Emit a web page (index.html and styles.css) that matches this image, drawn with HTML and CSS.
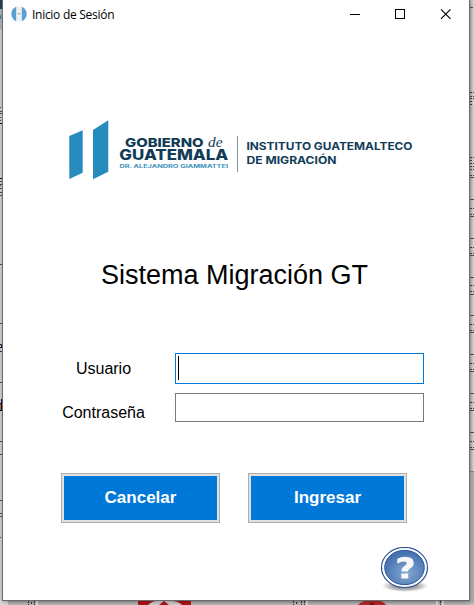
FILE: index.html
```html
<!DOCTYPE html>
<html lang="es">
<head>
<meta charset="utf-8">
<title>Inicio de Sesión</title>
<link rel="stylesheet" href="styles.css">
</head>
<body>
<svg class="backdrop" width="474" height="605" viewBox="0 0 474 605" aria-hidden="true">
  <defs>
    <linearGradient id="fade" x1="0" x2="1"><stop offset="0" stop-color="#b6b6b6"/><stop offset="1" stop-color="#dadada"/></linearGradient>
    <linearGradient id="fadeDown" x1="0" x2="0" y1="0" y2="1"><stop offset="0" stop-color="#a9a9a9"/><stop offset="1" stop-color="#c2c2c2"/></linearGradient>
  </defs>
  <rect width="474" height="605" fill="#dcdcdc"/>
  <rect width="2" height="9" fill="#24435a"/><rect y="9" width="2" height="20" fill="#b5c3ca"/><rect y="15" width="1" height="4" fill="#3c85a4"/>
  <rect x="470" width="4" height="605" fill="url(#fade)"/>
  <rect x="470" y="471" width="4" height="134" fill="#b3b3b3"/>
  <rect x="8" y="601" width="466" height="4" fill="url(#fadeDown)"/>
  <g stroke="#555">
    <path d="M0 111.500H2M0 113.500H2M0 181.500H2M0 184.500H2M0 188.500H2M0 192.500H2M0 195.500H2M0 264.500H2M0 323.500H2M0 382.500H2M0 441.500H2M0 454.500H2M0 500.500H2M0 513.500H2M0 516.500H2"/>
    <path stroke-dasharray="1 1" d="M0 107.500H3M0 117.500H3M0 120.500H3M0 185.500H3M0 537.500H3"/>
    <path stroke="#111" d="M0 123.500H2M0 178.500H2"/>
    <path d="M470 7.500H473M470 177.500H474M470 199.500H474M470 216.500H474M470 238.500H474M470 255.500H474M470 277.500H474M470 294.500H474M470 315.500H474M470 332.500H474M470 354.500H474M470 371.500H474M470 393.500H474M470 410.500H474M470 432.500H474M470 449.500H474"/>
    <path stroke="#444" stroke-dasharray="2 1" d="M470 92.500H474M470 96.500H474M470 98.500H474M470 101.500H473M470 104.500H473M470 157.500H474M470 160.500H473M470 163.500H474M470 166.500H474M470 169.500H474M470 175.500H474M470 208.500H474M470 214.500H474M470 247.500H474M470 253.500H474M470 285.500H474M470 291.500H474M470 324.500H474M470 330.500H474M470 363.500H474M470 369.500H474M470 402.500H474M470 408.500H474M470 441.500H474M470 447.500H474"/>
    <path stroke="#8b8b8b" d="M470 471.500H474"/>
  </g>
  <path d="M0 344.500H1.500V348M0 347.500H2M0 351.500H1.500" stroke="#161a3c" fill="none"/>
  <path d="M1.500 399V411M0 403.500H2M0 410.500H2" stroke="#100c35" fill="none"/><rect y="404" width="1" height="6" fill="#c67c32"/>
  <path stroke="#333" stroke-dasharray="2 1" d="M28.500 601V605M31.500 602V605M34.500 601V605M293.500 601V605M296.500 602V605M301.500 601V605M304.500 601V605M440.500 601V605"/>
  <path stroke="#e4e4e4" stroke-width="2" d="M37 601V605M307 601V605M437 601V605M443 601V605"/>
  <rect x="138" y="601" width="53" height="4" fill="#b51616"/>
  <path d="M148 605Q152 601 157 601H172Q178 601 182 605Z" fill="#d2d2d2"/>
  <path d="M159 605L164 601L169 605Z" fill="#b51616"/>
  <path d="M358 605Q362 601 366 601H379Q383 601 386 605Z" fill="#b92828"/><path d="M369 605L372 602L375 605Z" fill="#801515"/>
</svg>
<main class="window">
  <header class="titlebar">
    <svg class="app-icon" width="16" height="16" viewBox="0 0 16 16">
      <clipPath id="disc"><circle cx="8" cy="8" r="7.700"/></clipPath>
      <g clip-path="url(#disc)"><rect width="16" height="16" fill="#eef1f3"/><rect width="5.200" height="16" fill="#5c9fd1"/><rect x="10.800" width="5.200" height="16" fill="#5c9fd1"/><path d="M6.500 7L8 8.500L9.500 7M7 7.500H9" stroke="#b5b39c" fill="none"/></g>
    </svg>
    <h1 class="caption">Inicio de Sesión</h1>
    <svg class="controls" width="138" height="29" viewBox="0 0 138 29" fill="none" stroke="#000">
      <path d="M19 14.500H29"/><rect x="64.500" y="9.500" width="9" height="9"/><path d="M110 9.300L119.500 18.800M119.500 9.300L110 18.800" stroke-width="1.150"/>
    </svg>
  </header>
  <svg class="logo" width="360" height="80" viewBox="60 110 360 80">
    <g fill="#278bbd"><path d="M69.300 136L82.700 130.300V172.800L69.300 179Z"/><path d="M93 130L108.300 120.300V171.800L93 179.200Z"/></g>
    <g fill="#113c57">
      <text class="brand" x="125" y="146.800" font-size="12.400" textLength="78.500" lengthAdjust="spacingAndGlyphs">GOBIERNO</text>
      <text class="script" x="208" y="146.800" font-size="14" textLength="14.500" lengthAdjust="spacingAndGlyphs">de</text>
      <text class="brand" x="119.300" y="160" font-size="14.300" textLength="109" lengthAdjust="spacingAndGlyphs">GUATEMALA</text>
      <text class="institute" x="246.500" y="149.800" font-size="10.400" textLength="166" lengthAdjust="spacingAndGlyphs">INSTITUTO GUATEMALTECO</text>
      <text class="institute" x="246.500" y="164" font-size="10.400" textLength="90" lengthAdjust="spacingAndGlyphs">DE MIGRACIÓN</text>
    </g>
    <text class="president" x="119.500" y="168.200" font-size="4.900" fill="#3c93b9" textLength="108.500" lengthAdjust="spacingAndGlyphs">DR. ALEJANDRO GIAMMATTEI</text>
    <path d="M237.500 136V172" stroke="#8495a0"/>
  </svg>
  <h2 class="system">Sistema Migración GT</h2>
  <form class="login">
    <label class="label" for="user">Usuario</label>
    <div class="field active" id="user"><span class="caret"></span></div>
    <label class="label pass" for="password">Contraseña</label>
    <div class="field" id="password"></div>
  </form>
  <div class="actions">
    <button class="btn" type="button">Cancelar</button>
    <button class="btn" type="button">Ingresar</button>
  </div>
  <svg class="help" width="54" height="48" viewBox="0 0 54 48">
    <defs>
      <radialGradient id="blue" cx=".55" cy=".65" r=".6"><stop offset="0" stop-color="#86a9d3"/><stop offset="1" stop-color="#4470ad"/></radialGradient>
      <radialGradient id="shade"><stop offset=".5" stop-color="#777" stop-opacity=".7"/><stop offset="1" stop-color="#777" stop-opacity="0"/></radialGradient>
    </defs>
    <ellipse cx="27" cy="39" rx="23" ry="6" fill="url(#shade)"/>
    <ellipse cx="26.500" cy="20.500" rx="23" ry="20" fill="#fff" stroke="#28529a" stroke-width="1.200"/>
    <ellipse cx="26.500" cy="20.500" rx="19.800" ry="17.200" fill="url(#blue)" stroke="#2d599c"/>
    <path d="M19.300 16.500V11.700Q23 9.800 27 9.800Q35.800 9.800 35.800 16.200Q35.800 19.400 32.400 21.300Q30 22.700 30 24.500H23.500Q23.300 20.900 26.500 19Q28.800 17.600 28.800 16.300Q28.800 14.500 26 14.500Q23 14.500 19.300 16.500ZM23.300 26.600H30.300V31.600H23.300Z" fill="#f6f7f8"/>
  </svg>
</main>
</body>
</html>
```
FILE: styles.css
```css
* { box-sizing: border-box; }
body {
  margin: 0;
  width: 474px;
  height: 605px;
  overflow: hidden;
  font-family: "Liberation Sans", Arial, sans-serif;
  color: #000;
}
.backdrop { position: absolute; top: 0; left: 0; z-index: -1; }
.window {
  display: flex;
  flex-direction: column;
  width: 468px;
  height: 601px;
  margin-left: 2px;
  background: #fff;
  border: 1px solid #6b6b6b;
  border-top: 0;
  box-shadow: 0 1px 5px rgba(0, 0, 0, .35);
}
.titlebar { display: flex; height: 29px; padding-left: 8px; }
.app-icon { margin-top: 6px; }
.caption {
  margin: 0 auto 0 5px;
  font: 12px/29px "Open Sans", "Noto Sans", sans-serif;
  letter-spacing: -.28px;
}
.logo { margin: 81px 0 0 57px; }
.brand { font-family: Inter, sans-serif; font-weight: 850; }
.institute { font-family: Inter, sans-serif; font-weight: 750; }
.president { font-family: Inter, sans-serif; font-weight: 700; }
.script { font-family: "Liberation Serif", serif; font-style: italic; }
.system {
  margin: 69px 0 0 98px;
  font-size: 27px;
  line-height: 32px;
  font-weight: 400;
  white-space: nowrap;
}
.login {
  display: grid;
  grid-template: 31px 29px / 83px 249px;
  gap: 9px 30px;
  margin: 62px 0 0 59px;
}
.label { font-size: 16px; line-height: 31px; text-align: center; }
.pass { padding-top: 4px; }
.field { border: 1px solid #7a7a7a; background: #fff; }
.active { border-color: #0078d7; padding: 2px; }
.caret { display: block; width: 1px; height: 24px; background: #000; }
.actions { display: flex; gap: 28px; margin: 51px 0 0 58px; }
.btn {
  width: 159px;
  height: 50px;
  padding: 0;
  border: 1px solid #adadad;
  background: #0078d7;
  box-shadow: inset 0 0 0 2px #e1e1e1;
  color: #fff;
  font: bold 17px "Liberation Sans", Arial, sans-serif;
}
.help { margin: 24px 0 0 375px; }
```
